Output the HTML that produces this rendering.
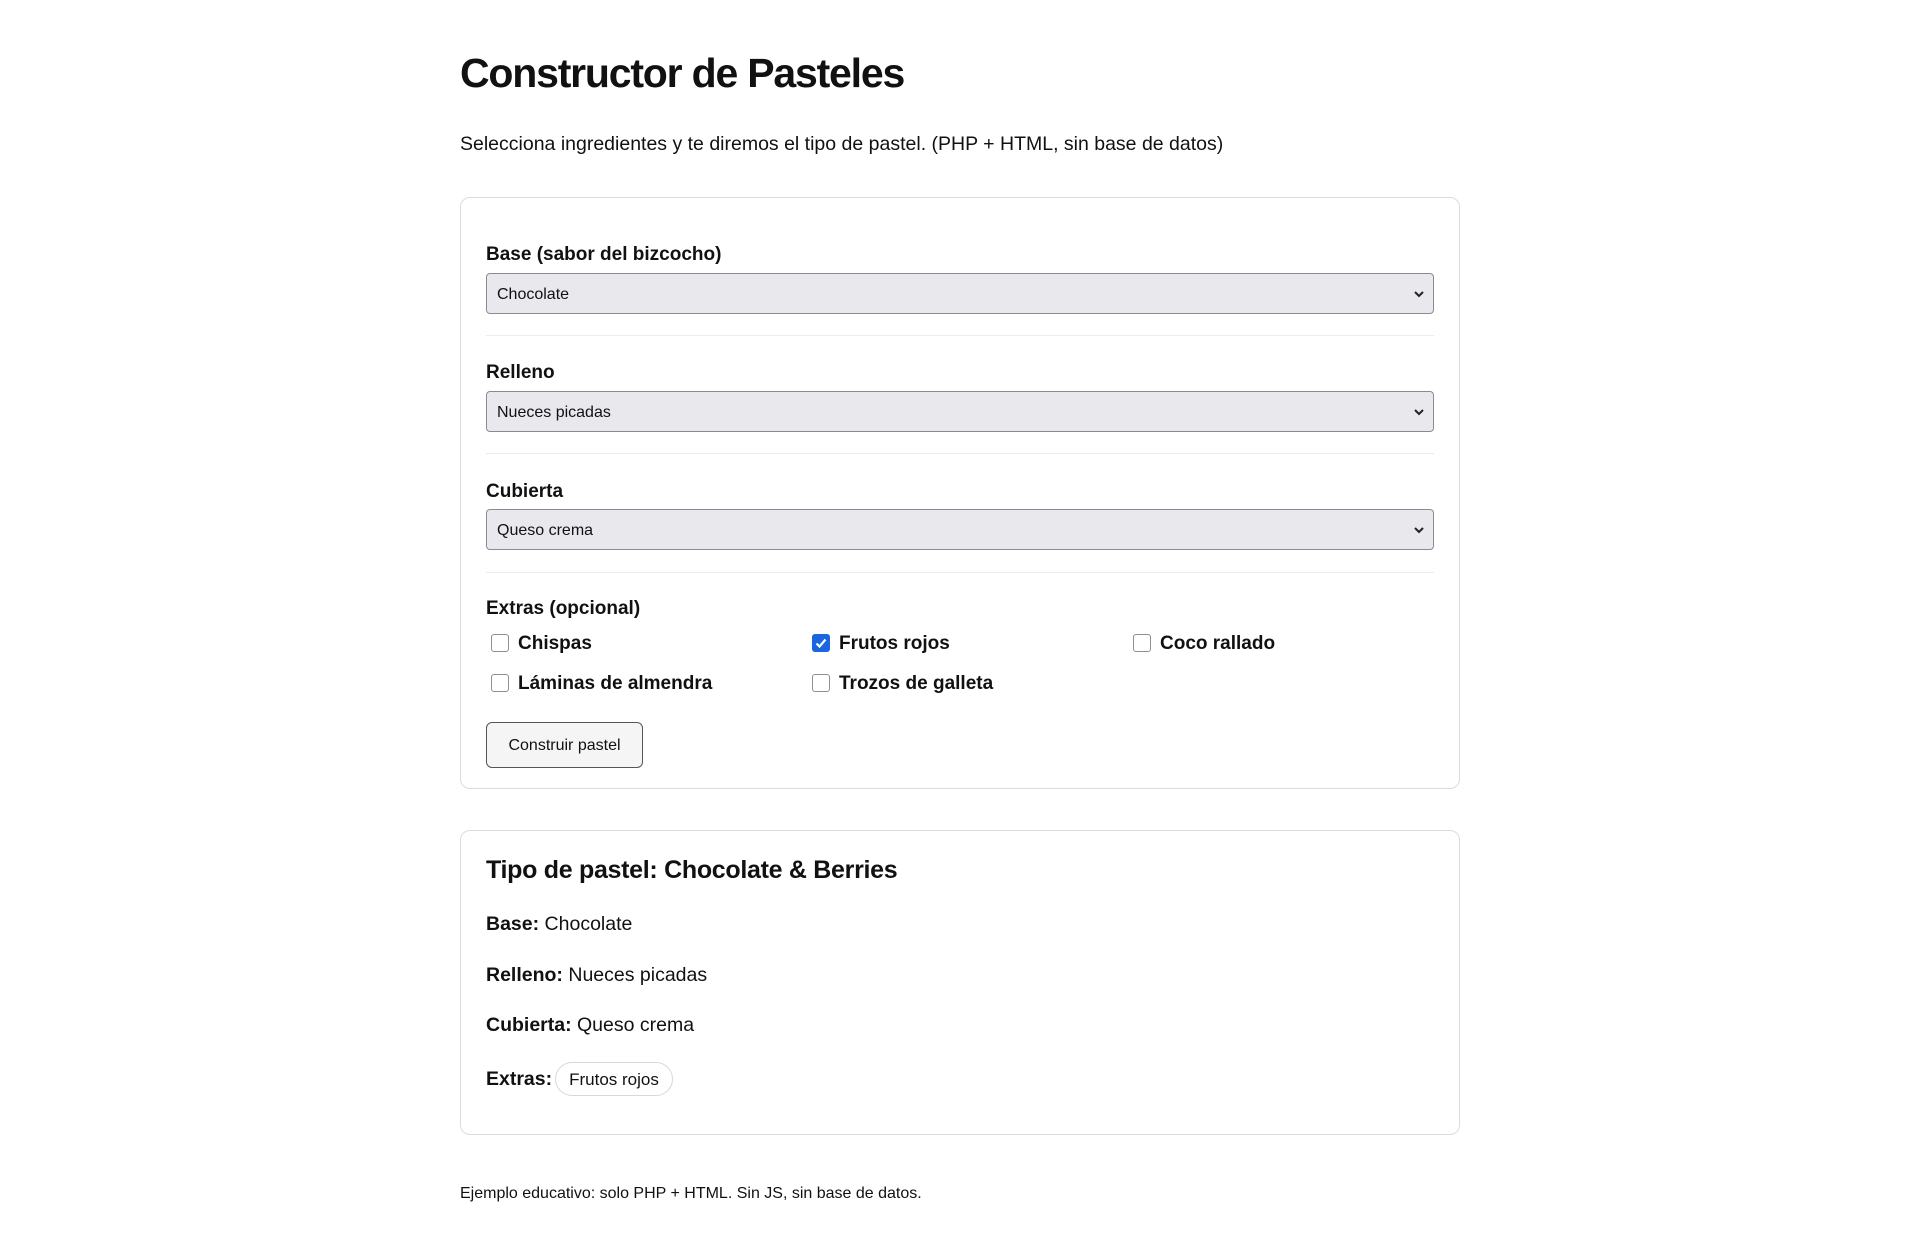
<!DOCTYPE html>
<html><head><meta charset="utf-8"><style>
*{box-sizing:border-box;margin:0;padding:0}
body{background:#fff;font-family:"Liberation Sans",sans-serif;color:#111;width:1920px;height:1246px;position:relative;overflow:hidden}
.a{position:absolute;white-space:nowrap}
h1{position:absolute;left:460px;top:50px;font-size:41px;font-weight:bold;letter-spacing:-1.2px}
.card{position:absolute;left:460px;width:1000px;border:1px solid #dcdcdc;border-radius:10px}
.lbl{position:absolute;left:486px;font-size:19px;font-weight:bold;color:#111}
.sel{position:absolute;left:486px;width:948px;height:41px;background:#e9e8ed;border:1px solid #8a8a94;border-radius:4px;font-size:16px;padding:12px 10px}
.sel svg{position:absolute;right:8px;top:15px}
.hr{position:absolute;left:486px;width:948px;height:1px;background:#ececec}
.cb{position:absolute;width:18px;height:18px;border:1px solid #8f8f8f;border-radius:3px;background:#fff}
.cbl{position:absolute;font-size:19px;font-weight:bold;color:#111}
.r{position:absolute;left:486px;font-size:19.5px}
</style></head><body>
<h1>Constructor de Pasteles</h1>
<div class="a" style="left:460px;top:133px;font-size:19.5px">Selecciona ingredientes y te diremos el tipo de pastel. (PHP + HTML, sin base de datos)</div>
<div class="card" style="top:197px;height:592px"></div>
<div class="lbl" style="top:244px">Base (sabor del bizcocho)</div>
<div class="sel" style="top:273px">Chocolate<svg width="12" height="10" viewBox="0 0 12 10"><path d="M2 3l4 4 4-4" fill="none" stroke="#222" stroke-width="2"/></svg></div>
<div class="hr" style="top:335px"></div>
<div class="lbl" style="top:362px">Relleno</div>
<div class="sel" style="top:391px">Nueces picadas<svg width="12" height="10" viewBox="0 0 12 10"><path d="M2 3l4 4 4-4" fill="none" stroke="#222" stroke-width="2"/></svg></div>
<div class="hr" style="top:453px"></div>
<div class="lbl" style="top:481px">Cubierta</div>
<div class="sel" style="top:509px">Queso crema<svg width="12" height="10" viewBox="0 0 12 10"><path d="M2 3l4 4 4-4" fill="none" stroke="#222" stroke-width="2"/></svg></div>
<div class="hr" style="top:572px"></div>
<div class="lbl" style="top:598px">Extras (opcional)</div>
<div class="cb" style="left:491px;top:634px"></div><div class="cbl" style="left:518px;top:633px">Chispas</div>
<div class="cb" style="left:812px;top:634px;background:#1a66e0;border-color:#1a66e0"><svg width="16" height="16" viewBox="0 0 16 16"><path d="M3.5 8.5l3 3 6-7" fill="none" stroke="#fff" stroke-width="2.2"/></svg></div><div class="cbl" style="left:839px;top:633px">Frutos rojos</div>
<div class="cb" style="left:1133px;top:634px"></div><div class="cbl" style="left:1160px;top:633px">Coco rallado</div>
<div class="cb" style="left:491px;top:674px"></div><div class="cbl" style="left:518px;top:673px">Láminas de almendra</div>
<div class="cb" style="left:812px;top:674px"></div><div class="cbl" style="left:839px;top:673px">Trozos de galleta</div>
<div class="a" style="left:486px;top:722px;width:157px;height:46px;border:1px solid #555;border-radius:6px;background:#f5f5f5;font-size:16px;text-align:center;line-height:46px">Construir pastel</div>
<div class="card" style="top:830px;height:305px"></div>
<div class="a" style="left:486px;top:856px;font-size:25px;font-weight:bold;letter-spacing:-0.3px">Tipo de pastel: Chocolate &amp; Berries</div>
<div class="r" style="top:913px"><b>Base:</b> Chocolate</div>
<div class="r" style="top:964px"><b>Relleno:</b> Nueces picadas</div>
<div class="r" style="top:1014px"><b>Cubierta:</b> Queso crema</div>
<div class="r" style="top:1068px"><b>Extras:</b></div>
<div class="a" style="left:555px;top:1062px;width:118px;height:34px;border:1px solid #d8d8d8;border-radius:17px;font-size:17px;text-align:center;line-height:34px">Frutos rojos</div>
<div class="a" style="left:460px;top:1185px;font-size:16px">Ejemplo educativo: solo PHP + HTML. Sin JS, sin base de datos.</div>
</body></html>
